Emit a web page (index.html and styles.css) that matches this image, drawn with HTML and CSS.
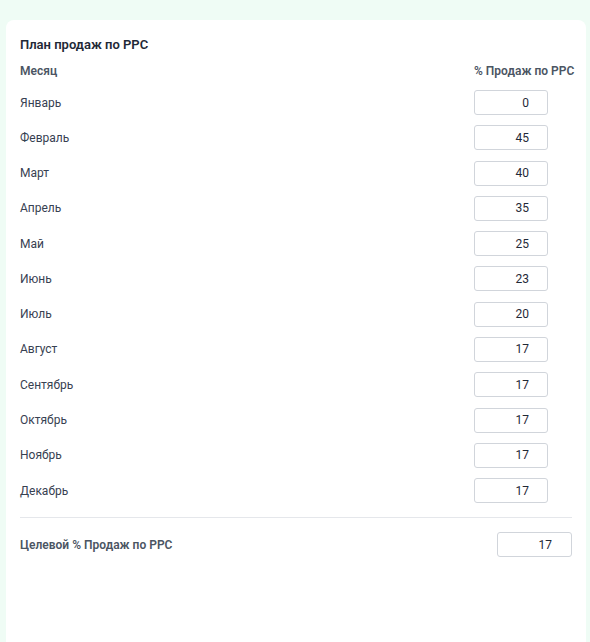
FILE: index.html
```html
<!DOCTYPE html>
<html lang="ru">
<head>
    <meta charset="UTF-8">
    <meta name="viewport" content="width=device-width, initial-scale=1.0">
    <title>План продаж по PPC</title>
    <link rel="stylesheet" href="styles.css">
</head>
<body>
    <div class="card">
        <h3 class="card_title">План продаж по PPC</h3>

        <table class="plan">
            <thead>
                <tr>
                    <th class="col_month">Месяц</th>
                    <th class="col_value">% Продаж по PPC</th>
                </tr>
            </thead>
            <tbody>
                <tr><td>Январь</td><td><input type="text" value="0"></td></tr>
                <tr><td>Февраль</td><td><input type="text" value="45"></td></tr>
                <tr><td>Март</td><td><input type="text" value="40"></td></tr>
                <tr><td>Апрель</td><td><input type="text" value="35"></td></tr>
                <tr><td>Май</td><td><input type="text" value="25"></td></tr>
                <tr><td>Июнь</td><td><input type="text" value="23"></td></tr>
                <tr><td>Июль</td><td><input type="text" value="20"></td></tr>
                <tr><td>Август</td><td><input type="text" value="17"></td></tr>
                <tr><td>Сентябрь</td><td><input type="text" value="17"></td></tr>
                <tr><td>Октябрь</td><td><input type="text" value="17"></td></tr>
                <tr><td>Ноябрь</td><td><input type="text" value="17"></td></tr>
                <tr><td>Декабрь</td><td><input type="text" value="17"></td></tr>
            </tbody>
        </table>

        <!-- целевой процент -->
        <div class="target">
            <span class="target_label">Целевой % Продаж по PPC</span>
            <input type="text" value="17">
        </div>
    </div>
</body>
</html>
```

FILE: styles.css
```css
*{
    margin: 0;
    padding: 0;
    box-sizing: border-box;
}
body{
    background: #effcf5;
    font-family: Roboto, "Noto Sans", sans-serif;
    font-size: 12px;
    color: #374151;
    padding: 20px 4px 0 6px;
    height: 642px;
    overflow: hidden;
}
.card{
    background: #fff;
    border-radius: 8px 8px 0 0;
    padding: 16px 14px 0 14px;
    height: 622px;
}
.card_title{
    font-size: 13px;
    font-weight: 600;
    color: #1f2937;
    line-height: 18px;
    margin-bottom: 8px;
}
.plan{
    width: 100%;
    border-collapse: collapse;
    table-layout: fixed;
}
.plan th{
    font-weight: 600;
    color: #4b5563;
    text-align: left;
    line-height: 18px;
    padding-bottom: 5px;
    white-space: nowrap;
}
.plan .col_value{
    width: 98px;
}
.plan td{
    height: 35.27px;
    padding: 0;
    vertical-align: middle;
}
.plan input, .target input{
    width: 74px;
    height: 25px;
    border: 1px solid #d1d5db;
    border-radius: 3px;
    font-family: inherit;
    font-size: 12px;
    color: #1f2937;
    text-align: right;
    padding-right: 18px;
    outline: none;
    display: block;
}
.target{
    display: flex;
    justify-content: space-between;
    align-items: center;
    border-top: 1px solid #e5e7eb;
    margin-top: 9px;
    padding-top: 14px;
}
.target_label{
    font-weight: 600;
    color: #4b5563;
}
.target input{
    width: 75px;
    padding-right: 19px;
}
```
